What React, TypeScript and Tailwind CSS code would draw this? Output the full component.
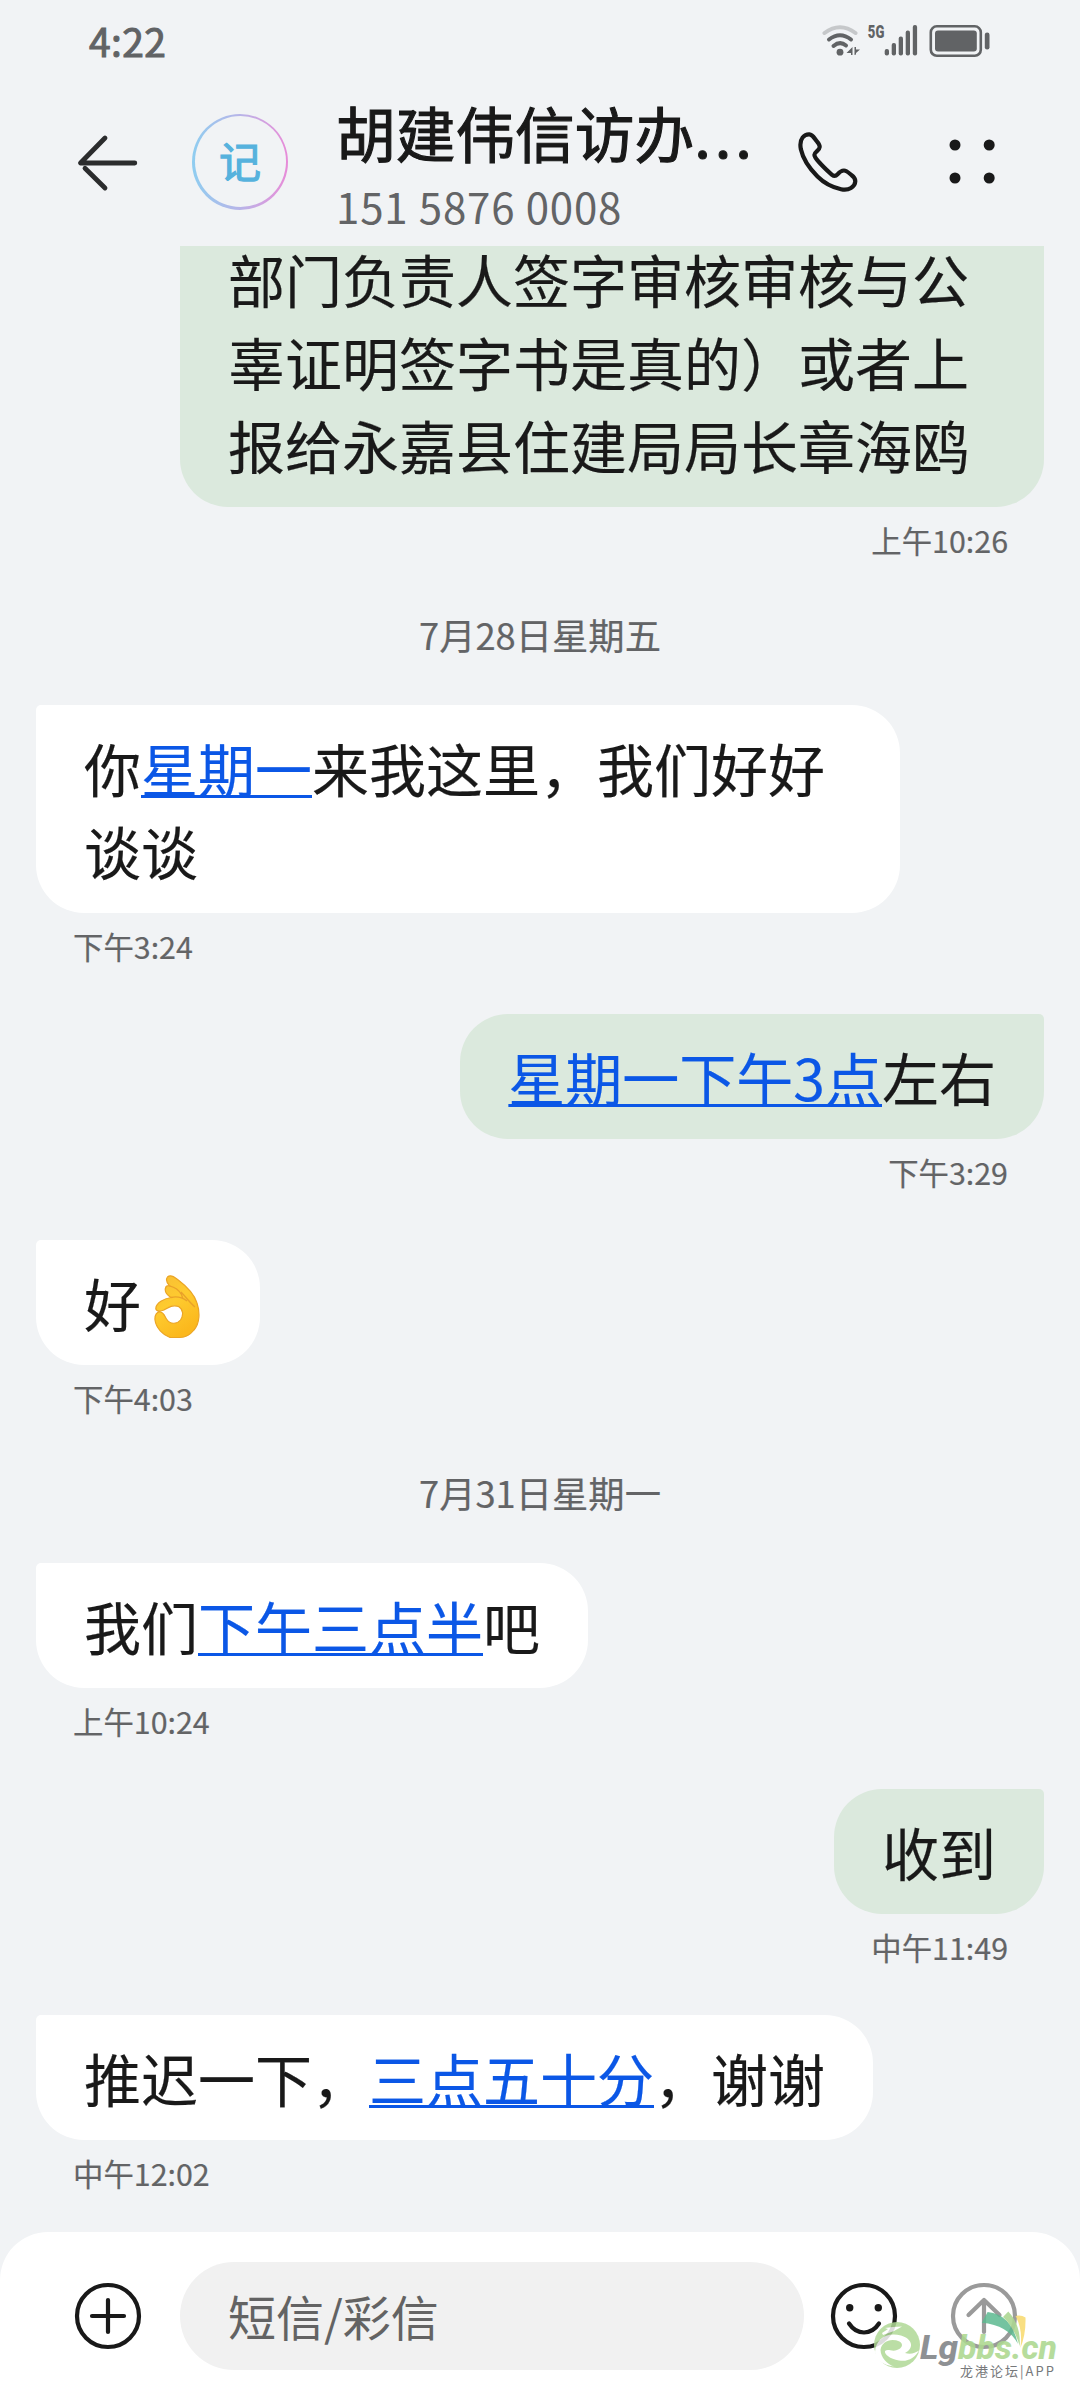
import React from "react";

function Stamp({ children, right, last }: { children: React.ReactNode; right?: boolean; last?: boolean }) {
  return (
    <div
      className={`mt-[11px] flex h-11 items-center px-[37px] text-[30.4px] leading-none text-[#636466] ${
        right ? "justify-end pr-[36px]" : ""
      } ${last ? "" : "mb-[46px]"}`}
    >
      {children}
    </div>
  );
}

function DateLine({ children }: { children: React.ReactNode }) {
  return (
    <div className="mb-[45px] flex h-[52px] items-center justify-center text-[36.3px] leading-none text-[#636466]">
      {children}
    </div>
  );
}

function Received({ children }: { children: React.ReactNode }) {
  return (
    <div className="max-w-[864px] self-start rounded-[48px] rounded-tl-[5px] bg-white px-12 pt-[21px] pb-[21px]">
      {children}
    </div>
  );
}

function Sent({ children }: { children: React.ReactNode }) {
  return (
    <div className="max-w-[864px] self-end rounded-[48px] rounded-tr-[5px] bg-[#dbe9dd] px-12 py-[21px]">
      {children}
    </div>
  );
}

function Link({ children }: { children: React.ReactNode }) {
  return (
    <span className="text-[#0b57e6] underline decoration-[3px] underline-offset-[3px] [text-decoration-skip-ink:none]">
      {children}
    </span>
  );
}

function StatusBar() {
  return (
    <div className="flex h-[81px] shrink-0 items-center justify-between pr-[90px] pl-[89px] text-[#616365]">
      <span className="text-[39px] leading-none tracking-[0.4px] [-webkit-text-stroke:1px_#616365]">4:22</span>
      <div className="flex items-center">
        <svg width="38" height="34" viewBox="822 23 38 34" fill="none" strokeLinecap="round" strokeWidth="4">
          <path d="M824.5 32 Q840 20.500 855.500 32" stroke="#c6c8ca" />
          <path d="M829 38.500 Q840 30 851 38.500" stroke="#616365" />
          <path d="M833.500 45 Q840 39.500 846 44.500" stroke="#616365" />
          <circle cx="840" cy="51.200" r="3.400" fill="#616365" />
          <path d="M846.500 52 L852.500 46 V54 H851 V52Z M854.500 46 V54 L856 53.500 V52 L860 48.500 H856 V46Z" fill="#616365" />
        </svg>
        <svg className="ml-[7px]" width="52" height="34" viewBox="867 23 52 34" fill="#616365">
          <text
            x="867.800"
            y="37.300"
            fontFamily="Roboto, sans-serif"
            fontWeight="900"
            fontSize="18"
            textLength="16.500"
            lengthAdjust="spacingAndGlyphs"
          >
            5G
          </text>
          <rect x="884.700" y="48" width="4.300" height="6.500" rx="2" />
          <rect x="891.700" y="42" width="4.300" height="12.500" rx="2" />
          <rect x="898.700" y="35.500" width="4.300" height="19" rx="2" />
          <rect x="905.700" y="29.500" width="4.300" height="25" rx="2" />
          <rect x="912.800" y="24" width="4.300" height="30.500" rx="2" />
        </svg>
        <svg className="ml-[9px]" width="62" height="34" viewBox="928 22.500 62 34" fill="#616365">
          <rect x="930.800" y="24.800" width="50" height="29.500" rx="6" fill="none" stroke="#616365" strokeWidth="2.600" />
          <rect x="935" y="29" width="41.800" height="21" rx="3" />
          <rect x="984.800" y="31" width="4.700" height="17" rx="2.300" />
        </svg>
      </div>
    </div>
  );
}

function Header() {
  return (
    <div className="flex h-[165px] shrink-0 items-center pl-[76px]">
      <svg width="64" height="60" viewBox="76 132 64 60" className="relative -top-px shrink-0" fill="none" stroke="#2b2c2d" strokeWidth="4.800" strokeLinecap="round">
        <path d="M105 137 L80.500 162 H134.800" strokeLinejoin="round" />
        <path d="M105 187 L85 167.200" />
      </svg>
      <div className="relative -top-0.5 ml-[52px] size-24 shrink-0 rounded-full bg-linear-to-r from-[#8ecdf0] via-[#b7b4e8] to-[#e78bd8] p-[2.500px]">
        <div className="flex size-full items-center justify-center rounded-full bg-[#f1f3f5] text-[42px] leading-none text-[#56b2dd] [-webkit-text-stroke:1.200px_#56b2dd]">
          <span className="relative -top-0.5">记</span>
        </div>
      </div>
      <div className="ml-12 flex w-[440px] shrink-0 flex-col pt-[10px]">
        <div className="text-[59.700px] leading-[74px] whitespace-nowrap text-[#191919] [-webkit-text-stroke:1.100px_#191919]">
          胡建伟信访办<span className="tracking-[4px]">...</span>
        </div>
        <div className="text-[42px] leading-[73px] tracking-[0.850px] text-[#636466]">151 5876 0008</div>
      </div>
      <svg className="-mt-[2px] ml-[22px] shrink-0" width="60" height="62" viewBox="0 0 60 62" fill="none" stroke="#191919" strokeWidth="4.200" strokeLinejoin="round">
        <path d="M11.400 2.400 C14.500 2.600 16 5.500 17.500 7.600 C19.500 10 21.800 12 21.700 15 C21.600 18.500 16.500 19.500 16.400 22.800 C16.500 25.500 20 29 22.500 31.800 C26.500 36 30 39.500 34 42.800 C36 44.400 38 44 39.500 42.300 C41.500 40 43 38.400 46 38.500 C48.500 38.600 51 41 53.400 43 C55.500 44.500 57.300 46 57.300 49.200 C57.200 52 55.500 54.500 53 56 C50 57.800 46.500 58 43 57.200 C35 55.500 26 51 19.500 44.500 C12 37 5 27 2.800 17 C2 12.500 2.200 8.500 4.600 5.500 C6.300 3.500 8.500 2.200 11.400 2.400Z" />
      </svg>
      <svg className="-mt-[4px] ml-[91px] shrink-0" width="46" height="46" viewBox="949 139 46 46" fill="#191919">
        <circle cx="955" cy="145" r="5.500" />
        <circle cx="989.200" cy="145" r="5.500" />
        <circle cx="955" cy="178" r="5.500" />
        <circle cx="989.200" cy="178" r="5.500" />
      </svg>
    </div>
  );
}

function OkHand() {
  return (
    <svg className="relative top-[4px] left-[2px]" width="71" height="66" viewBox="0 0 71 66">
      <defs>
        <linearGradient id="skin" x1="0" y1="0" x2="0.5" y2="1">
          <stop offset="0" stopColor="#f7bd35" />
          <stop offset="0.500" stopColor="#fecb2f" />
          <stop offset="1" stopColor="#fbb81d" />
        </linearGradient>
      </defs>
      <path
        d="M24.500 3 C27 0.500 31 2.500 34 5 C42 11 51 19 54 29 C57 38 57 49 51 56 C47 61 43 63.500 37 63.500 H27 C20 61 13 54 12 46 C11.500 41 14 37.500 17.500 38 C21 38.500 21.500 42 23.500 45 C27 50.500 34 50.500 37.500 46 C41 41 40 35 35.500 32.500 C30 30.500 26 33 21 36 C17 37.500 13 37.500 12.800 34.500 C13 29 21 24.500 28 23.500 C24 21 21.500 17.500 22.500 14 C23 12 25 11.500 26.500 11.800 C24 9 22.500 5.500 24.500 3Z"
        fill="url(#skin)"
        stroke="#eba526"
        strokeWidth="1.200"
      />
      <path d="M26.500 11.800 C31 13 36 16 38 20 M28 23.500 C34 22 40 24 44 27 M38 18 C42 22 47 29 52 33 M38 19 L40 25" fill="none" stroke="#e9a12a" strokeWidth="1.300" />
    </svg>
  );
}

function Watermark() {
  return (
    <svg className="absolute right-[10px] bottom-[15px]" width="200" height="80" viewBox="0 0 200 80">
      <g opacity="0.85">
        <circle cx="27" cy="40" r="23" fill="#b0d996" />
        <path
          d="M5 47 C6 34 16 27 31 30.500 C42 33.500 45 43 35 48 C40 49.500 45 48.500 49 45.500 C45 53 38 57 29 55.500 C20 54 14 49 15 46 C18 43.500 22 47 27 45 C32 43.500 34 39 29.500 36.500 C21 33 12 36 10.500 45 C11 53 17 59 24 61.500 C13 60 5 55 5 47Z"
          fill="#fff"
        />
        <path d="M12 28 L18 24 L15 23 L23 22 L32 21.500 L24 26 L13 30Z" fill="#fff" />
      </g>
      <path d="M117.600 7 Q141 9 148 39 Q138 20 111.800 17.700Z" fill="#5cb98f" opacity="0.85" />
      <path d="M138.300 6.500 L133 12 Q144 22 149.700 41 Q151 20 138.300 6.500Z" fill="#acd691" opacity="0.9" />
      <path d="M145.500 11 Q151 9.500 155.500 12.500 Q156 29 150.400 43 Q153 24 145.500 11Z" fill="#f8dc74" opacity="0.9" />
      <g fontFamily="Roboto, sans-serif" fontWeight="800" fontStyle="italic" fontSize="34" opacity="0.88">
        <text x="50" y="54.300" fill="#7f8286" textLength="38" lengthAdjust="spacingAndGlyphs">
          Lg
        </text>
        <text x="88" y="54.300" fill="#acd88f" textLength="99" lengthAdjust="spacingAndGlyphs">
          bbs.cn
        </text>
      </g>
      <text x="90" y="71" fill="#77797b" fontFamily="'Noto Sans CJK SC', sans-serif" fontSize="13" textLength="94">
        龙港论坛|APP
      </text>
    </svg>
  );
}

function Composer() {
  return (
    <div className="relative mt-auto h-[168px] shrink-0 rounded-t-[48px] bg-white">
      <div className="flex items-center pt-[30px] pl-[74px]">
        <svg width="68" height="68" viewBox="-34 -34 68 68" fill="none" stroke="#191919" strokeWidth="4.200" strokeLinecap="round">
          <circle r="31" />
          <path d="M-16 0 H16 M0 -16 V16" />
        </svg>
        <div className="ml-[38px] flex h-[108px] w-[624px] items-center rounded-full bg-[#f1f1f1] pl-12 text-[48px] leading-none text-[#636363]">
          <span className="relative -top-px">短信/彩信</span>
        </div>
        <svg className="ml-[26px]" width="68" height="68" viewBox="-34 -34 68 68" fill="none" stroke="#191919" strokeWidth="4.200" strokeLinecap="round">
          <circle r="31" />
          <path d="M-15 7.500 C-7 19.500 7 19.500 15 7.500" />
          <circle cx="-14.300" cy="-8.200" r="3.700" fill="#191919" stroke="none" />
          <circle cx="14.300" cy="-8.200" r="3.700" fill="#191919" stroke="none" />
        </svg>
        <svg className="ml-[52px]" width="68" height="68" viewBox="-34 -34 68 68" fill="none" stroke="#9a9a9a" strokeWidth="4.200" strokeLinecap="round" strokeLinejoin="round">
          <circle r="31" />
          <path d="M-15.500 -1 L0 -16 L15.500 -1 M0 -15 V16" />
        </svg>
      </div>
      <Watermark />
    </div>
  );
}

export default function App() {
  return (
    <div
      lang="zh-CN"
      className="flex h-[2400px] w-[1080px] flex-col overflow-hidden bg-[#f1f3f5] font-['Noto_Sans_CJK_SC',sans-serif]"
    >
      <StatusBar />
      <Header />
      <div className="flex shrink-0 flex-col px-9 text-[57px] leading-[83px] text-[#191919] [-webkit-text-stroke:0.200px]">
        <div className="flex h-[261px] w-[864px] flex-col justify-end self-end overflow-hidden rounded-b-[48px] bg-[#dbe9dd] px-12 pb-[21px]">
          <p>部门负责人签字审核审核与公辜证明签字书是真的）或者上报给永嘉县住建局局长章海鸥</p>
        </div>
        <Stamp right>上午10:26</Stamp>
        <DateLine>7月28日星期五</DateLine>
        <Received>
          你<Link>星期一</Link>来我这里，我们好好谈谈
        </Received>
        <Stamp>下午3:24</Stamp>
        <Sent>
          <Link>星期一下午3点</Link>左右
        </Sent>
        <Stamp right>下午3:29</Stamp>
        <Received>
          <div className="flex h-[83px] items-center">
            好<OkHand />
          </div>
        </Received>
        <Stamp>下午4:03</Stamp>
        <DateLine>7月31日星期一</DateLine>
        <Received>
          我们<Link>下午三点半</Link>吧
        </Received>
        <Stamp>上午10:24</Stamp>
        <Sent>收到</Sent>
        <Stamp right>中午11:49</Stamp>
        <Received>
          推迟一下，<Link>三点五十分</Link>，谢谢
        </Received>
        <Stamp last>中午12:02</Stamp>
      </div>
      <Composer />
    </div>
  );
}
